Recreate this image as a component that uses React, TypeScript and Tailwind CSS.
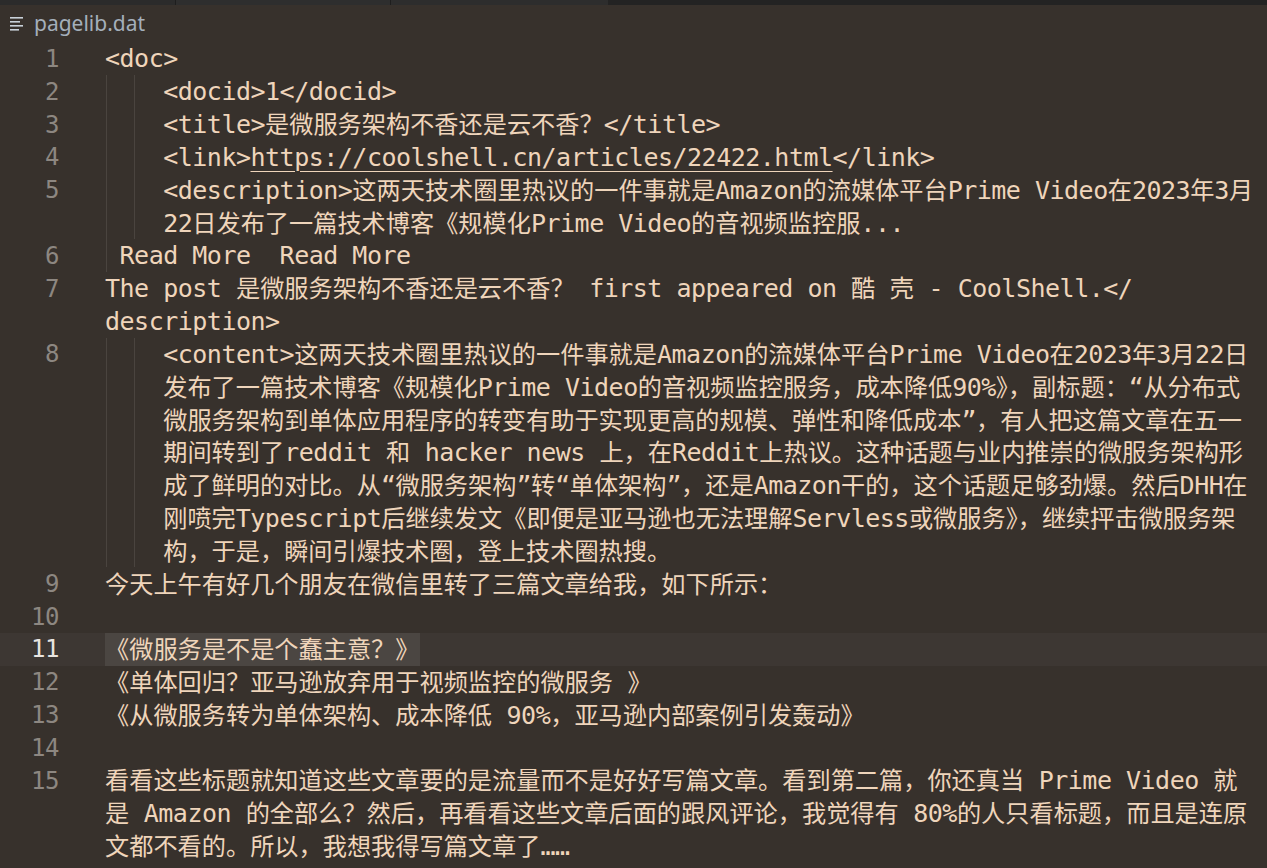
import React from 'react';

type Row = {
    num?: number;
    text: string;
    indent?: number; // in columns
    guides?: number[]; // x offsets from text start
    link?: boolean;
    current?: boolean;
};

const G1 = [1];
const G2 = [1, 29];

const rows: Row[] = [
    { num: 1, text: '<doc>' },
    { num: 2, text: '<docid>1</docid>', indent: 4, guides: G2 },
    { num: 3, text: '<title>是微服务架构不香还是云不香？</title>', indent: 4, guides: G2 },
    { num: 4, text: '', indent: 4, guides: G2, link: true },
    { num: 5, text: '<description>这两天技术圈里热议的一件事就是Amazon的流媒体平台Prime Video在2023年3月', indent: 4, guides: G2 },
    { text: '22日发布了一篇技术博客《规模化Prime Video的音视频监控服...', indent: 4, guides: G2 },
    { num: 6, text: ' Read More  Read More', guides: G1 },
    { num: 7, text: 'The post 是微服务架构不香还是云不香？ first appeared on 酷 壳 - CoolShell.</' },
    { text: 'description>' },
    { num: 8, text: '<content>这两天技术圈里热议的一件事就是Amazon的流媒体平台Prime Video在2023年3月22日', indent: 4, guides: G2 },
    { text: '发布了一篇技术博客《规模化Prime Video的音视频监控服务，成本降低90%》，副标题：“从分布式', indent: 4, guides: G2 },
    { text: '微服务架构到单体应用程序的转变有助于实现更高的规模、弹性和降低成本”，有人把这篇文章在五一', indent: 4, guides: G2 },
    { text: '期间转到了reddit 和 hacker news 上，在Reddit上热议。这种话题与业内推崇的微服务架构形', indent: 4, guides: G2 },
    { text: '成了鲜明的对比。从“微服务架构”转“单体架构”，还是Amazon干的，这个话题足够劲爆。然后DHH在', indent: 4, guides: G2 },
    { text: '刚喷完Typescript后继续发文《即便是亚马逊也无法理解Servless或微服务》，继续抨击微服务架', indent: 4, guides: G2 },
    { text: '构，于是，瞬间引爆技术圈，登上技术圈热搜。', indent: 4, guides: G2 },
    { num: 9, text: '今天上午有好几个朋友在微信里转了三篇文章给我，如下所示：' },
    { num: 10, text: '' },
    { num: 11, text: '《微服务是不是个蠢主意？》', current: true },
    { num: 12, text: '《单体回归？亚马逊放弃用于视频监控的微服务 》' },
    { num: 13, text: '《从微服务转为单体架构、成本降低 90%，亚马逊内部案例引发轰动》' },
    { num: 14, text: '' },
    { num: 15, text: '看看这些标题就知道这些文章要的是流量而不是好好写篇文章。看到第二篇，你还真当 Prime Video 就' },
    { text: '是 Amazon 的全部么？然后，再看看这些文章后面的跟风评论，我觉得有 80%的人只看标题，而且是连原' },
    { text: '文都不看的。所以，我想我得写篇文章了……' },
];

const CJK = "font-['Noto_Sans_CJK_SC',sans-serif] text-[24.2px] tracking-normal";

// CJK runs get the CJK font at their own size, the rest stays monospace.
// ？ and ： sit centred in their cell in the reference, so nudge them over.
function Mixed({ s }: { s: string }) {
    const parts = s.split(/([？：]|[\u3000-\u9fff\uff00-\uffef]+)/).filter(Boolean);
    return (
        <>
            {parts.map((p, i) => {
                if (p === '？') {
                    return (
                        <span key={i} className={`${CJK} inline-block w-[24.2px]`}>
                            <span className="relative left-[5px]">{p}</span>
                        </span>
                    );
                }
                if (p === '：') {
                    return (
                        <span key={i} className={`${CJK} inline-block w-[24.2px]`}>
                            <span className="relative left-[7px]">{p}</span>
                        </span>
                    );
                }
                if (/[\u3000-\u9fff\uff00-\uffef]/.test(p)) {
                    return (
                        <span key={i} className={CJK}>
                            {p}
                        </span>
                    );
                }
                return <span key={i}>{p}</span>;
            })}
        </>
    );
}

function FileIcon() {
    return (
        <svg width="16" height="16" viewBox="0 0 16 16" className="text-[#c9d1d9]">
            <rect x="1" y="2" width="13" height="1.6" fill="currentColor" />
            <rect x="1" y="6" width="10" height="1.6" fill="currentColor" />
            <rect x="1" y="10" width="13" height="1.6" fill="currentColor" />
            <rect x="1" y="14" width="9" height="1.6" fill="currentColor" />
        </svg>
    );
}

export default function App() {
    return (
        <div className="w-[1267px] h-[868px] bg-[#37312c] overflow-hidden">
            {/* tab strip */}
            <div className="flex h-[5px]">
                <div className="w-[175px] bg-[#2b2b2b]" />
                <div className="w-[1px] bg-[#1e1e1e]" />
                <div className="w-[214px] bg-[#2e2e2e]" />
                <div className="w-[1px] bg-[#1e1e1e]" />
                <div className="w-[217px] bg-[#2d2d2d]" />
                <div className="flex-1 bg-[#232323]" />
            </div>

            <div className="h-[37.6px] flex items-center pl-[9px] gap-[9px] pb-[1px]">
                <FileIcon />
                <span className="font-['Noto_Sans',sans-serif] text-[21px] text-[#a4afbb] leading-none">pagelib.dat</span>
            </div>

            <div className="font-['DejaVu_Sans_Mono',monospace] text-[25px] tracking-[-0.5px] text-[#efd5bb]">
                {rows.map((r, i) => (
                    <div key={i} className={`flex h-[32.8px] items-center ${r.current ? 'bg-[#3d3733]' : ''}`}>
                        <div
                            className={`w-[105px] shrink-0 text-right pr-[46px] text-[24px] tracking-[-0.5px] ${
                                r.current ? 'text-[#e8e4e0]' : 'text-[#8d8781]'
                            }`}
                        >
                            {r.num ?? ''}
                        </div>
                        <div className="relative flex-1 h-full flex items-center whitespace-pre">
                            {r.guides?.map((g) => (
                                <div key={g} className="absolute top-0 bottom-0 w-[1px] bg-[#4a443f]" style={{ left: g }} />
                            ))}
                            {r.current && <div className="absolute top-0 bottom-0 left-0 w-[315px] bg-[#4b4642]" />}
                            <div className="relative" style={{ paddingLeft: (r.indent ?? 0) * 14.55 }}>
                                {r.link ? (
                                    <>
                                        <span>&lt;link&gt;</span>
                                        <span className="underline decoration-1 underline-offset-[5px]">https://coolshell.cn/articles/22422.html</span>
                                        <span>&lt;/link&gt;</span>
                                    </>
                                ) : (
                                    <Mixed s={r.text} />
                                )}
                            </div>
                        </div>
                    </div>
                ))}
            </div>
        </div>
    );
}
